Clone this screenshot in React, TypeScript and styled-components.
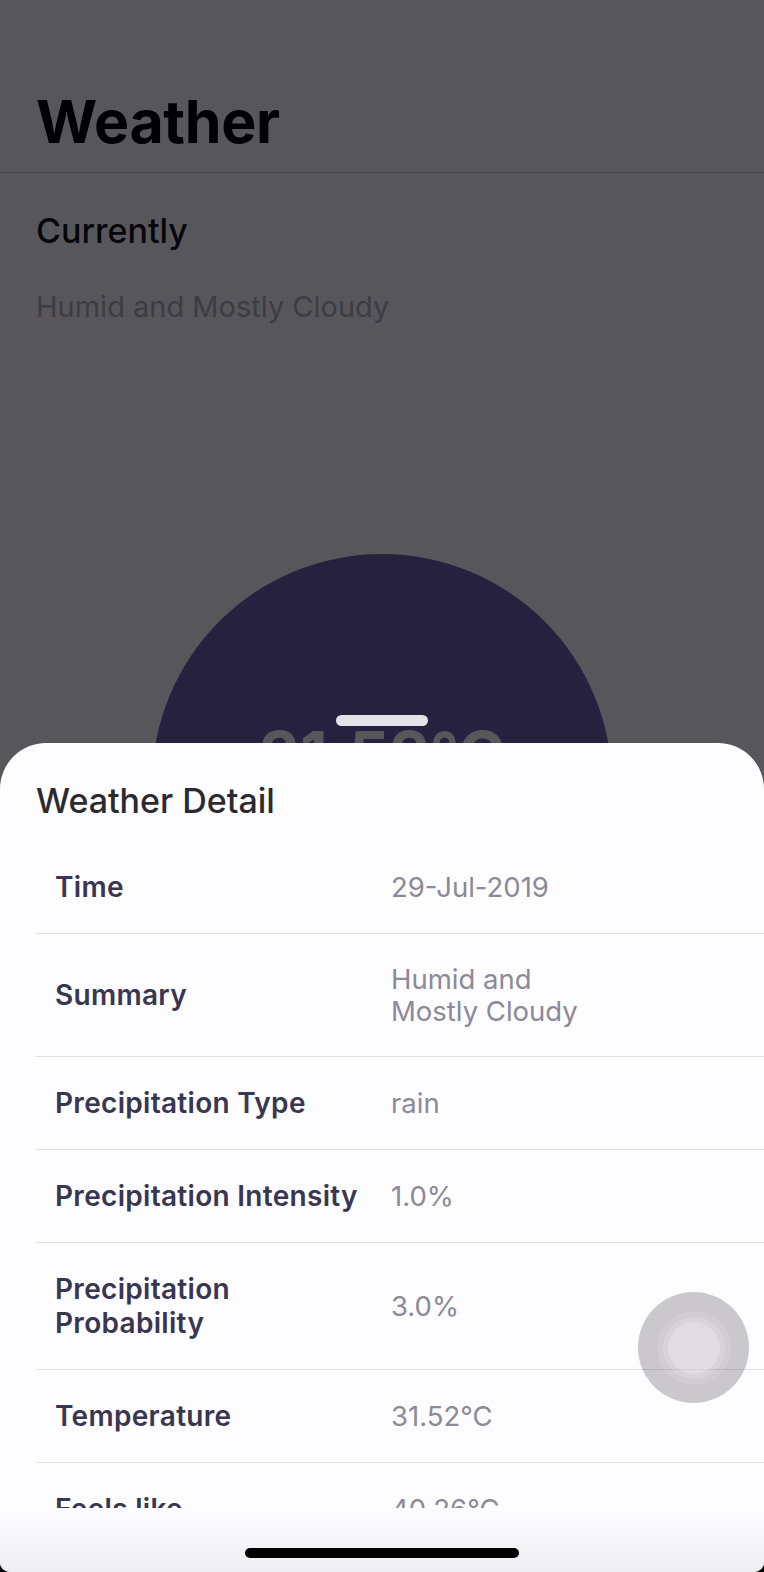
import styled, { createGlobalStyle } from "styled-components";

const GlobalStyle = createGlobalStyle`
  html, body {
    margin: 0;
    padding: 0;
    background: #000;
  }
  * {
    box-sizing: border-box;
  }
`;

const details = [
  { label: "Time", value: "29-Jul-2019" },
  { label: "Summary", value: "Humid and Mostly Cloudy" },
  { label: "Precipitation Type", value: "rain" },
  { label: "Precipitation Intensity", value: "1.0%" },
  { label: "Precipitation Probability", value: "3.0%" },
  { label: "Temperature", value: "31.52°C" },
  { label: "Feels like", value: "40.26°C" },
];

const App = () => {
  return (
    <Frame>
      <GlobalStyle />
      <Header>
        <LargeTitle>Weather</LargeTitle>
      </Header>
      <Section>
        <SectionTitle>Currently</SectionTitle>
        <Summary>Humid and Mostly Cloudy</Summary>
      </Section>
      <TempWrap>
        <TempCircle>
          <TempValue>31.52°C</TempValue>
          <TempSub>Feels like 40.26°C</TempSub>
        </TempCircle>
      </TempWrap>

      <Dim />

      <Sheet>
        <Handle />
        <SheetTitle>Weather Detail</SheetTitle>
        <List>
          {details.map((d) => (
            <Row key={d.label}>
              <Label>{d.label}</Label>
              <Value>{d.value}</Value>
            </Row>
          ))}
        </List>
        <Footer>
          <HomeIndicator />
        </Footer>
      </Sheet>

      <TouchButton>
        <TouchRing>
          <TouchCore />
        </TouchRing>
      </TouchButton>
    </Frame>
  );
};

export default App;

const Frame = styled.div`
  position: relative;
  width: 764px;
  height: 1572px;
  overflow: hidden;
  background: #ffffff;
  border-radius: 0 0 10px 10px;
  font-family: Inter, "Noto Sans", sans-serif;
`;

const Header = styled.header`
  padding: 86px 36px 15px;
  border-bottom: 1px solid #c4c3c8;
`;

const LargeTitle = styled.h1`
  margin: 0;
  font-size: 59px;
  line-height: 71px;
  font-weight: 700;
  letter-spacing: -0.3px;
  color: #000;
`;

const Section = styled.section`
  padding: 37px 36px 0;
`;

const SectionTitle = styled.h2`
  margin: 0;
  font-size: 34px;
  line-height: 41px;
  font-weight: 500;
  color: #141416;
`;

const Summary = styled.p`
  margin: 39px 0 0;
  font-size: 29px;
  line-height: 34px;
  font-weight: 400;
  color: #b3b0ba;
`;

const TempWrap = styled.div`
  display: flex;
  justify-content: center;
  padding-top: 230px;
`;

const TempCircle = styled.div`
  width: 460px;
  height: 460px;
  border-radius: 50%;
  background: #6d61ad;
  display: flex;
  flex-direction: column;
  align-items: center;
  justify-content: center;
  gap: 25px;
`;

const TempValue = styled.div`
  font-size: 64px;
  line-height: 75px;
  font-weight: 700;
  color: #fff;
`;

const TempSub = styled.div`
  font-size: 28px;
  line-height: 34px;
  color: #fff;
`;

const Dim = styled.div`
  position: absolute;
  inset: 0;
  background: rgba(0, 0, 6, 0.66);
`;

const Sheet = styled.div`
  position: absolute;
  top: 743px;
  left: 0;
  right: 0;
  bottom: 0;
  display: flex;
  flex-direction: column;
  background: #fdfcfe;
  border-radius: 46px 46px 0 0;
`;

const Handle = styled.div`
  position: absolute;
  top: -28px;
  left: 50%;
  width: 92px;
  height: 11px;
  margin-left: -46px;
  border-radius: 6px;
  background: #e4e3e8;
`;

const SheetTitle = styled.h3`
  margin: 37px 36px 20px;
  font-size: 34px;
  line-height: 41px;
  font-weight: 500;
  color: #2b2a2e;
`;

const List = styled.div`
  flex: 1;
  overflow: hidden;
`;

const Row = styled.div`
  display: flex;
  align-items: center;
  margin-left: 36px;
  padding: 29px 0 29px 19px;
  border-bottom: 1px solid #e0dfe4;
`;

const Label = styled.div`
  flex: 0 0 336px;
  padding-right: 20px;
  font-size: 28px;
  line-height: 34px;
  font-weight: 600;
  letter-spacing: 0.3px;
  color: #393651;
`;

const Value = styled.div`
  max-width: 215px;
  font-size: 27.5px;
  line-height: 32px;
  font-weight: 400;
  color: #8c8999;
`;

const Footer = styled.div`
  height: 64px;
  display: flex;
  justify-content: center;
  padding-top: 40px;
  background: linear-gradient(#fdfcfe, #eeedf1);
`;

const HomeIndicator = styled.div`
  width: 274px;
  height: 10px;
  border-radius: 5px;
  background: #000;
`;

const TouchButton = styled.div`
  position: absolute;
  left: 638px;
  top: 1292px;
  width: 111px;
  height: 111px;
  border-radius: 50%;
  background: rgba(40, 38, 52, 0.24);
  display: flex;
  align-items: center;
  justify-content: center;
`;

const TouchRing = styled.div`
  width: 74px;
  height: 74px;
  border-radius: 50%;
  background: radial-gradient(
    circle,
    rgba(255, 255, 255, 0.22) 0 31px,
    rgba(255, 255, 255, 0.1) 31px
  );
  display: flex;
  align-items: center;
  justify-content: center;
`;

const TouchCore = styled.div`
  width: 52px;
  height: 52px;
  border-radius: 50%;
  background: rgba(255, 255, 255, 0.22);
`;
